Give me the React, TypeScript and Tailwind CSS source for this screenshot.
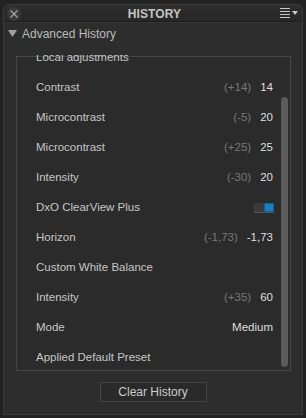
import React from "react";

type Row = { label: string; old?: string; value?: string; toggle?: boolean };

const rows: Row[] = [
  { label: "Local adjustments" },
  { label: "Contrast", old: "(+14)", value: "14" },
  { label: "Microcontrast", old: "(-5)", value: "20" },
  { label: "Microcontrast", old: "(+25)", value: "25" },
  { label: "Intensity", old: "(-30)", value: "20" },
  { label: "DxO ClearView Plus", toggle: true },
  { label: "Horizon", old: "(-1,73)", value: "-1,73" },
  { label: "Custom White Balance" },
  { label: "Intensity", old: "(+35)", value: "60" },
  { label: "Mode", value: "Medium" },
  { label: "Applied Default Preset" },
];

export default function App() {
  return (
    <div
      className="w-[306px] h-[418px] bg-[#222222] pt-[4px] px-[3px] pb-[3px] overflow-hidden"
      style={{ fontFamily: '"Liberation Sans", Arial, sans-serif' }}
    >
      <div className="h-full flex flex-col bg-[#2d2d2d] border border-[#3b3b3b] rounded-t-[6px]">
        {/* Title bar */}
        <div className="h-[17px] shrink-0 flex items-center justify-between px-[3px] pt-[1px] bg-gradient-to-b from-[#2e2e2e] to-[#272727] border-b border-[#1c1c1c] rounded-t-[6px]">
          <div className="w-[14px] h-[14px] rounded-full bg-[#3a3a3a] flex items-center justify-center">
            <svg width="8" height="8" viewBox="0 0 8 8" stroke="#a8a8a8" strokeWidth="1.1">
              <line x1="0.5" y1="0.5" x2="7.5" y2="7.5" />
              <line x1="7.5" y1="0.5" x2="0.5" y2="7.5" />
            </svg>
          </div>
          <span className="text-[12px] font-bold text-[#c4c4c4] tracking-[0.1px] ml-[8px]">HISTORY</span>
          <svg width="20" height="12" viewBox="0 0 20 12" className="mr-[-1px]">
            <g stroke="#c6c6c6" strokeWidth="1">
              <line x1="0" y1="0.5" x2="10" y2="0.5" />
              <line x1="0" y1="3.5" x2="10" y2="3.5" />
              <line x1="0" y1="6.5" x2="10" y2="6.5" />
              <line x1="0" y1="9.5" x2="10" y2="9.5" />
            </g>
            <polygon points="12,3 18,3 15,7" fill="#c6c6c6" />
          </svg>
        </div>

        {/* Section header */}
        <div className="h-[22px] shrink-0 flex items-center pl-[4px] gap-[5px] border-t border-[#353535]">
          <svg width="9" height="8" viewBox="0 0 9 8">
            <polygon points="0,0 9,0 4.5,7" fill="#a0a0a0" />
          </svg>
          <span className="text-[12px] text-[#bcbcbc]">Advanced History</span>
        </div>

        {/* History list, scrolled so the first entry is partly hidden */}
        <div className="relative ml-[12px] mr-[11px] mt-[11px] h-[316px] shrink-0 overflow-hidden">
          <div className="absolute inset-x-0 top-[1px] bottom-0 border border-[#464646] bg-[#2b2b2b]" />
          <div className="relative -mt-[12px] flex flex-col">
            {rows.map((r, i) => (
              <div key={i} className="h-[30px] flex items-center justify-between pl-[20px] pr-[18px] text-[11.5px]">
                <span className="text-[#c6c6c6]">{r.label}</span>
                {r.toggle ? (
                  <div className="w-[20px] h-[10px] bg-[#3a3a3a] border-b border-[#555555] flex justify-end mr-[-1px]">
                    <div className="w-[10px] h-[9px] bg-[#1b7dc4] border border-[#0f5d97]" />
                  </div>
                ) : (
                  <div className="flex items-center gap-[9px]">
                    {r.old && <span className="text-[#777777]">{r.old}</span>}
                    {r.value && <span className="text-[#dedede]">{r.value}</span>}
                  </div>
                )}
              </div>
            ))}
          </div>
          <div className="absolute right-[3px] top-[42px] bottom-[4px] w-[7px] rounded-[4px] bg-[#5c5c5c]" />
        </div>

        {/* Clear button */}
        <div className="flex justify-center mt-[11px]">
          <button className="w-[107px] h-[20px] border border-[#454545] bg-[#2a2a2a] text-[12px] text-[#cccccc] flex items-center justify-center">
            Clear History
          </button>
        </div>
      </div>
    </div>
  );
}
